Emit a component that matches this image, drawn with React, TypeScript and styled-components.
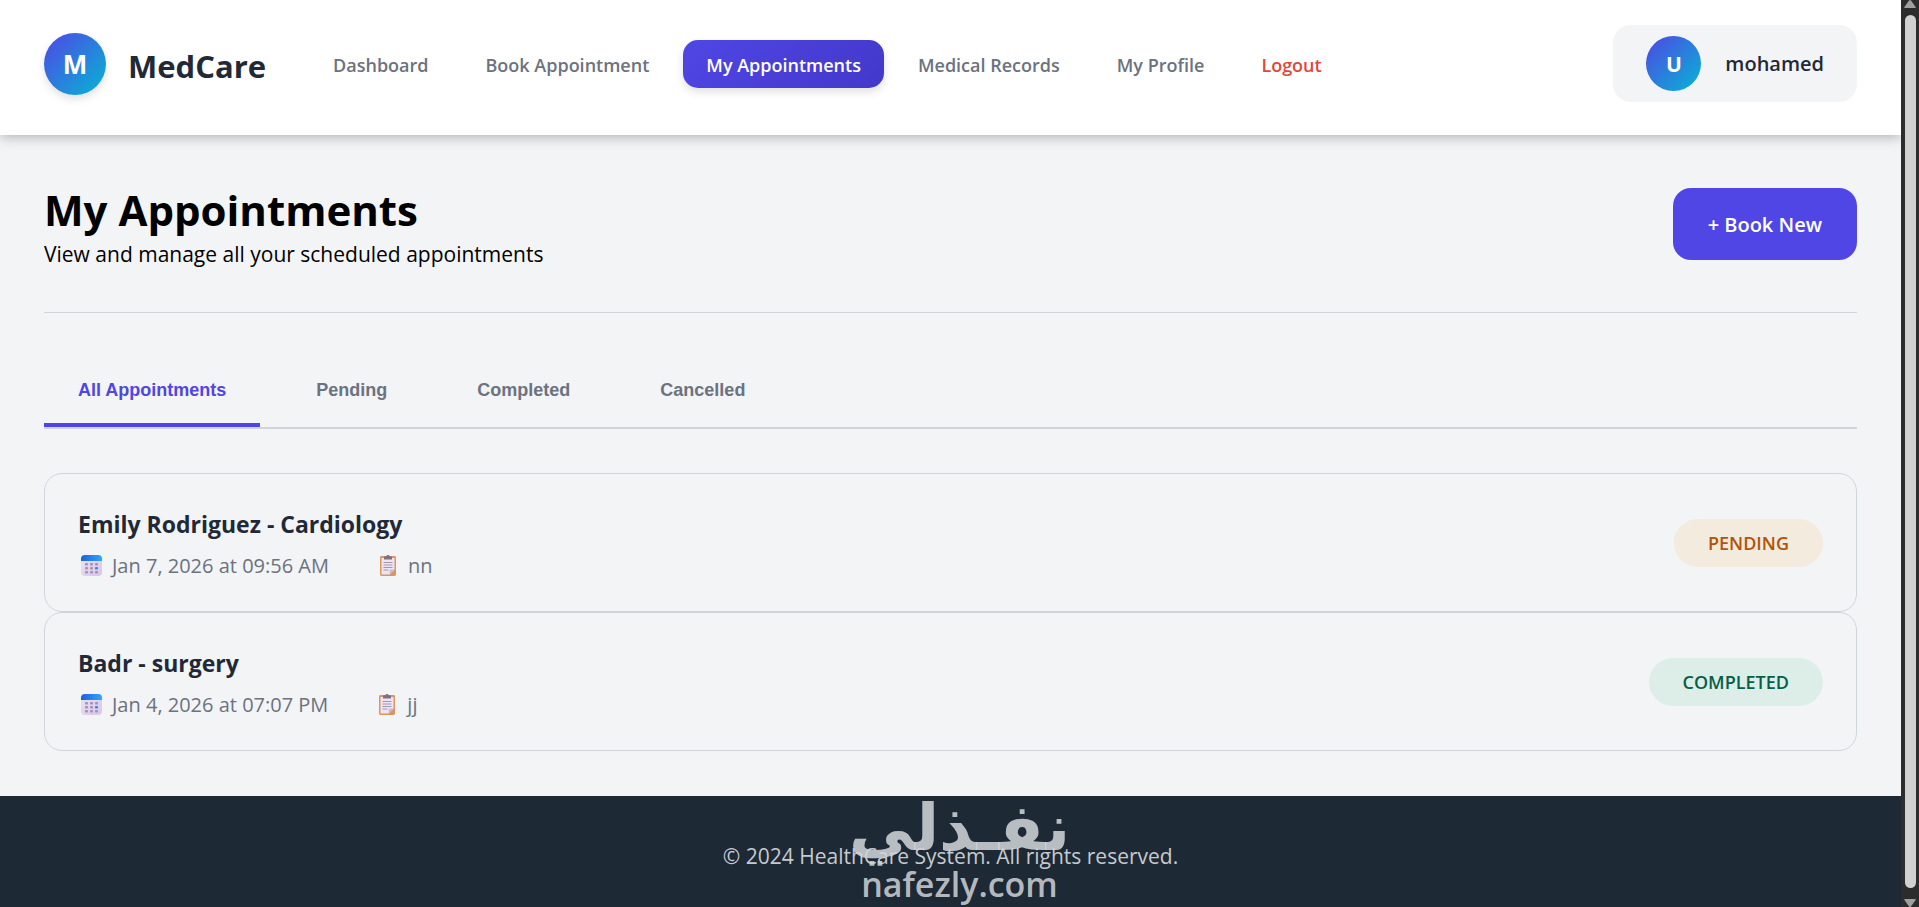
import React from 'react';
import styled, { createGlobalStyle, css } from 'styled-components';

const sans = `"Open Sans", "Noto Sans", sans-serif`;
const primary = '#4f46e5';
const ink = '#1f2937';
const muted = '#6b7280';
const line = '#d1d5db';
const surface = '#f3f4f6';
const accent = 'linear-gradient(135deg, #4f46e5, #06b6d4)';

const GlobalStyle = createGlobalStyle`
  *, *::before, *::after { box-sizing: border-box; }
  body {
    margin: 0;
    background: ${surface};
    color: #000;
    font-family: ${sans};
    font-size: 21px;
    line-height: 32px;
  }
  h1, h2, p { margin: 0; padding: 0; }
  a { color: inherit; text-decoration: none; }
  button { border: 0; background: none; cursor: pointer; }
`;

const Shell = styled.div`
  display: flex;
  height: 100vh;
  overflow: hidden;
`;

const Page = styled.div`
  flex: 1;
  min-width: 0;
  display: flex;
  flex-direction: column;
`;

const Header = styled.header`
  display: flex;
  align-items: flex-start;
  justify-content: space-between;
  padding: 25px 44px 33px;
  background: #fff;
  box-shadow: 0 2px 12px rgba(0, 0, 0, 0.28);
  clip-path: inset(0 0 -20px 0);
`;

const HeaderStart = styled.div`
  display: flex;
  align-items: center;
  gap: 44px;
  padding-top: 8px;
`;

const Brand = styled.a`
  display: flex;
  align-items: center;
  gap: 22px;
  color: ${ink};
  font-size: 31px;
  font-weight: 700;
`;

const BrandName = styled.span`
  padding-top: 4px;
`;

const Disc = styled.span<{ $size: number; $raised?: boolean }>`
  display: grid;
  place-items: center;
  width: ${(p) => p.$size}px;
  height: ${(p) => p.$size}px;
  border-radius: 50%;
  background: ${accent};
  color: #fff;
  font-size: ${(p) => (p.$raised ? 26 : 21)}px;
  font-weight: 700;
  ${(p) => p.$raised && css`box-shadow: 0 4px 8px rgba(0, 0, 0, 0.12);`}
`;

const Nav = styled.nav`
  display: flex;
  gap: 11px;
`;

const NavLink = styled.a<{ $active?: boolean; $danger?: boolean }>`
  padding: 9px 23px 7px;
  border-radius: 15px;
  color: ${(p) => (p.$danger ? '#e0483c' : muted)};
  font-size: 18px;
  font-weight: 600;
  ${(p) =>
    p.$active &&
    css`
      background: linear-gradient(135deg, #4f46e5, #4338ca);
      box-shadow: 0 4px 8px rgba(0, 0, 0, 0.12);
      color: #fff;
    `}
`;

const UserBox = styled.div`
  display: flex;
  align-items: center;
  gap: 24px;
  padding: 11px 33px;
  border-radius: 18px;
  background: ${surface};
  color: ${ink};
  font-size: 20px;
  font-weight: 600;
`;

const Main = styled.main`
  padding: 53px 44px 45px;
`;

const TitleRow = styled.div`
  display: flex;
  align-items: flex-start;
  justify-content: space-between;
  padding-bottom: 42px;
  border-bottom: 1px solid ${line};
`;

const Title = styled.h1`
  margin-bottom: 6px;
  font-size: 42px;
  line-height: 44px;
  font-weight: 700;
`;

const BookButton = styled.button`
  padding: 21px 35px 19px;
  border-radius: 18px;
  background: ${primary};
  color: #fff;
  font: 600 20px/32px ${sans};
`;

const Tabs = styled.div`
  display: flex;
  gap: 22px;
  margin: 44px 0;
  border-bottom: 2px solid ${line};
`;

const Tab = styled.button<{ $active?: boolean }>`
  padding: 22px 34px;
  border-bottom: 4px solid ${(p) => (p.$active ? primary : 'transparent')};
  color: ${(p) => (p.$active ? primary : muted)};
  font: 700 18px/22px "Liberation Sans", Arial, sans-serif;
`;

const Card = styled.article`
  display: flex;
  align-items: center;
  justify-content: space-between;
  padding: 32px 33px;
  border: 1px solid ${line};
  border-radius: 18px;
`;

const CardTitle = styled.h2`
  padding-top: 2px;
  color: ${ink};
  font-size: 23px;
  line-height: 32px;
  font-weight: 700;
`;

const Meta = styled.div`
  display: flex;
  gap: 45px;
  padding-top: 13px;
  color: ${muted};
  font-size: 20px;
  line-height: 26px;
`;

const MetaItem = styled.span`
  display: flex;
  align-items: center;
  gap: 6px;
`;

const Status = styled.span<{ $done?: boolean }>`
  padding: 8px 34px;
  border-radius: 24px;
  background: ${(p) => (p.$done ? '#ddeee9' : '#f3ebde')};
  color: ${(p) => (p.$done ? '#065f46' : '#b45309')};
  font-size: 18px;
  font-weight: 600;
`;

const Footer = styled.footer`
  position: relative;
  flex: 1 0 auto;
  padding: 44px;
  background: #1e2936;
  color: #c6c9cd;
  text-align: center;
`;

const Watermark = styled.div`
  position: absolute;
  top: 0;
  left: calc(50% + 9px);
  transform: translateX(-50%);
  display: flex;
  flex-direction: column;
  align-items: center;
  color: rgba(208, 211, 215, 0.87);
`;

const WatermarkArabic = styled.span`
  font: 700 65px/64px "DejaVu Sans", sans-serif;
`;

const WatermarkLatin = styled.span`
  font: 600 34px/48px ${sans};
`;

const ScrollTrack = styled.div`
  display: flex;
  flex-direction: column;
  align-items: center;
  justify-content: space-between;
  width: 18px;
  background: #2c2c2c;
`;

const ScrollThumb = styled.div`
  flex: 1;
  width: 11px;
  margin: 7px 0 11px;
  border-radius: 6px;
  background: #d1d1d1;
`;

const CalendarIcon = () => (
  <svg width="28" height="24" viewBox="0 0 28 24" aria-hidden="true">
    <defs>
      <linearGradient id="calTop" x1="0" x2="1">
        <stop offset="0" stopColor="#1d62d8" />
        <stop offset="1" stopColor="#35a4fa" />
      </linearGradient>
      <linearGradient id="calBody" x1="0" y1="0" x2="1" y2="1">
        <stop offset="0" stopColor="#ece4f4" />
        <stop offset="1" stopColor="#d9c3ea" />
      </linearGradient>
    </defs>
    <rect x="3" y="1" width="21" height="21" rx="4" fill="url(#calBody)" />
    <path d="M3 7V5a4 4 0 0 1 4-4h13a4 4 0 0 1 4 4v2z" fill="url(#calTop)" />
    <g fill="#a493b2">
      {[9, 13, 17].map((y) =>
        [7, 12, 17].map((x) => (
          <rect key={`${x}-${y}`} x={x} y={y} width="3" height="2.6" rx="0.8" fill={x === 17 && y === 13 ? '#2b8df0' : undefined} />
        )),
      )}
    </g>
  </svg>
);

const ClipboardIcon = () => (
  <svg width="28" height="24" viewBox="0 0 28 24" aria-hidden="true">
    <rect x="6" y="2" width="16" height="20" rx="1.4" fill="#d9975f" />
    <path d="M7.5 4h13v11.500l-4.800 5H7.500z" fill="#efe4f3" />
    <path d="M20.500 15.500l-4.800 5v-3.800q0-1.200 1.200-1.200z" fill="#cdb5d8" />
    <path d="M10 5.500V3.200q0-.9.900-.9h1.400a1.800 1.800 0 0 1 3.400 0h1.400q.9 0 .9.900v2.300z" fill="#81707f" />
    <path d="M9.500 8.500h9M9.500 11h9M9.500 13.500h9M9.500 16h5" stroke="#a596b0" strokeWidth="1" />
  </svg>
);

const Arrow = ({ down }: { down?: boolean }) => (
  <svg width="12" height="8" viewBox="0 0 12 8" aria-hidden="true">
    <path d={down ? 'M1 0h10q1 0 .6 1L7 7.500q-1 1-2 0L.4 1Q0 0 1 0z' : 'M1 8h10q1 0 .6-1L7 .5q-1-1-2 0L.4 7Q0 8 1 8z'} fill="#a0a0a0" />
  </svg>
);

const links = ['Dashboard', 'Book Appointment', 'My Appointments', 'Medical Records', 'My Profile', 'Logout'];
const tabs = ['All Appointments', 'Pending', 'Completed', 'Cancelled'];
const appointments = [
  { title: 'Emily Rodriguez - Cardiology', date: 'Jan 7, 2026 at 09:56 AM', note: 'nn', status: 'PENDING' },
  { title: 'Badr - surgery', date: 'Jan 4, 2026 at 07:07 PM', note: 'jj', status: 'COMPLETED' },
];

export default function App() {
  return (
    <Shell>
      <GlobalStyle />
      <Page>
        <Header>
          <HeaderStart>
            <Brand href="#">
              <Disc $size={62} $raised>M</Disc>
              <BrandName>MedCare</BrandName>
            </Brand>
            <Nav>
              {links.map((label) => (
                <NavLink key={label} href="#" $active={label === 'My Appointments'} $danger={label === 'Logout'}>
                  {label}
                </NavLink>
              ))}
            </Nav>
          </HeaderStart>
          <UserBox>
            <Disc $size={55}>U</Disc>
            mohamed
          </UserBox>
        </Header>
        <Main>
          <TitleRow>
            <div>
              <Title>My Appointments</Title>
              <p>View and manage all your scheduled appointments</p>
            </div>
            <BookButton type="button">+ Book New</BookButton>
          </TitleRow>
          <Tabs role="tablist">
            {tabs.map((label, i) => (
              <Tab key={label} type="button" role="tab" aria-selected={i === 0} $active={i === 0}>
                {label}
              </Tab>
            ))}
          </Tabs>
          {appointments.map((a) => (
            <Card key={a.title}>
              <div>
                <CardTitle>{a.title}</CardTitle>
                <Meta>
                  <MetaItem><CalendarIcon />{a.date}</MetaItem>
                  <MetaItem><ClipboardIcon />{a.note}</MetaItem>
                </Meta>
              </div>
              <Status $done={a.status === 'COMPLETED'}>{a.status}</Status>
            </Card>
          ))}
        </Main>
        <Footer>
          <p>© 2024 HealthCare System. All rights reserved.</p>
          <Watermark>
            <WatermarkArabic lang="ar" dir="rtl">نفـذلي</WatermarkArabic>
            <WatermarkLatin>nafezly.com</WatermarkLatin>
          </Watermark>
        </Footer>
      </Page>
      <ScrollTrack>
        <Arrow />
        <ScrollThumb />
        <Arrow down />
      </ScrollTrack>
    </Shell>
  );
}
